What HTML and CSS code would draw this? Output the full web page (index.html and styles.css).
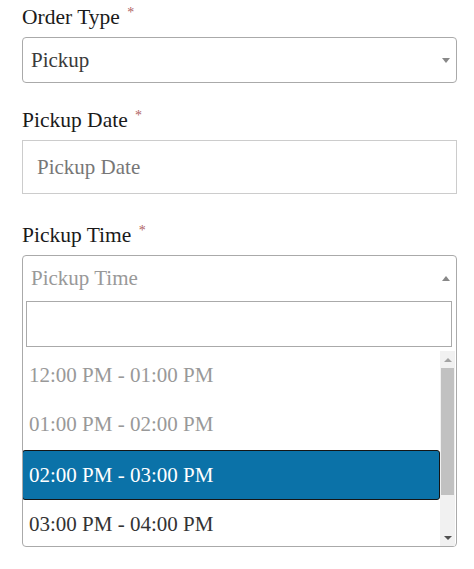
FILE: index.html
```html
<!DOCTYPE html>
<html lang="en">
<head>
  <meta charset="UTF-8">
  <title>Order</title>
  <link rel="stylesheet" href="styles.css">
</head>
<body>
  <form class="order-form">
    <div class="field field-type">
      <label class="lbl">Order Type <span class="req">*</span></label>
      <div class="select-box">
        <span>Pickup</span>
        <span class="caret down"></span>
      </div>
    </div>

    <div class="field field-date">
      <label class="lbl">Pickup Date <span class="req">*</span></label>
      <input class="text-input" type="text" placeholder="Pickup Date">
    </div>

    <div class="field">
      <label class="lbl">Pickup Time <span class="req">*</span></label>
      <div class="s2">
        <div class="s2-sel">
          <span class="s2-placeholder">Pickup Time</span>
          <span class="caret up"></span>
        </div>
        <div class="s2-search">
          <input type="text">
        </div>
        <div class="s2-results">
          <ul class="s2-list">
            <li class="s2-opt">12:00 PM - 01:00 PM</li>
            <li class="s2-opt">01:00 PM - 02:00 PM</li>
            <li class="s2-opt active">02:00 PM - 03:00 PM</li>
            <li class="s2-opt open">03:00 PM - 04:00 PM</li>
          </ul>
          <div class="scrollbar">
            <div class="sb-btn"><span class="sb-arrow up"></span></div>
            <div class="sb-thumb"></div>
            <div class="sb-track"></div>
            <div class="sb-btn"><span class="sb-arrow down"></span></div>
          </div>
        </div>
      </div>
    </div>
  </form>
</body>
</html>
```

FILE: styles.css
```css
html { background: #fff; }
body {
  margin: 0;
  color: #222;
}
.order-form {
  width: 435px;
  padding: 5px 0 0 22px;
}
.lbl, .select-box, .text-input, .s2-sel, .s2-search input, .s2-opt {
  font-family: "Liberation Serif", Tinos, serif;
}
.lbl {
  display: block;
  font-size: 21.5px;
  line-height: 24px;
  margin-bottom: 8px;
  color: #1a1a1a;
}
.field-type { margin-bottom: 25px; }
.field-date { margin-bottom: 29px; }
.req {
  color: #b0625f;
  font-size: 14px;
  line-height: 0;
  vertical-align: 7px;
  margin-left: 2px;
}

.select-box {
  height: 46px;
  box-sizing: border-box;
  border: 1px solid #aaa;
  border-radius: 4px;
  padding: 0 6px 0 8px;
  display: flex;
  align-items: center;
  justify-content: space-between;
  font-size: 21px;
  color: #3a3a3a;
}
.caret {
  width: 0; height: 0;
  border-left: 4px solid transparent;
  border-right: 4px solid transparent;
}
.caret.down { border-top: 5px solid #888; }
.caret.up { border-bottom: 5px solid #888; }

.text-input {
  display: block;
  width: 100%;
  height: 54px;
  box-sizing: border-box;
  border: 1px solid #ccc;
  padding: 0 14px;
  margin: 0;
  font-size: 21px;
  color: #444;
}
.text-input::placeholder { color: #777; }

.s2 {
  border: 1px solid #aaa;
  border-radius: 4px;
}
.s2-sel {
  height: 44px;
  padding: 0 6px 0 8px;
  display: flex;
  align-items: center;
  justify-content: space-between;
  font-size: 21px;
}
.s2-placeholder { color: #999; }
.s2-search {
  padding: 1px 4px 4px 3px;
}
.s2-search input {
  display: block;
  width: 100%;
  height: 46px;
  box-sizing: border-box;
  border: 1px solid #aaa;
  margin: 0;
  padding: 0 6px;
  font-size: 21px;
}
.s2-results {
  display: flex;
  height: 195px;
}
.s2-list {
  flex: 1;
  list-style: none;
  margin: 0;
  padding: 0;
  overflow: hidden;
}
.s2-opt {
  height: 49px;
  box-sizing: border-box;
  padding: 0 6px;
  display: flex;
  align-items: center;
  font-size: 21px;
  color: #999;
}
.s2-opt.active {
  height: 50px;
  margin-top: 1px;
  background: #0b72a8;
  color: #fff;
  border: 1px solid #151515;
  border-radius: 3px;
  margin-left: -1px;
}
.s2-opt.open { color: #333; }

.scrollbar {
  width: 15px;
  margin-right: 1px;
  background: #f1f1f1;
  display: flex;
  flex-direction: column;
}
.sb-btn {
  height: 17px;
  display: flex;
  align-items: center;
  justify-content: center;
}
.sb-arrow {
  width: 0; height: 0;
  border-left: 4px solid transparent;
  border-right: 4px solid transparent;
}
.sb-arrow.up { border-bottom: 4px solid #a3a3a3; }
.sb-arrow.down { border-top: 4px solid #505050; }
.sb-thumb {
  height: 127px;
  margin: 0 1px;
  background: #c1c1c1;
}
.sb-track { flex: 1; }
```
